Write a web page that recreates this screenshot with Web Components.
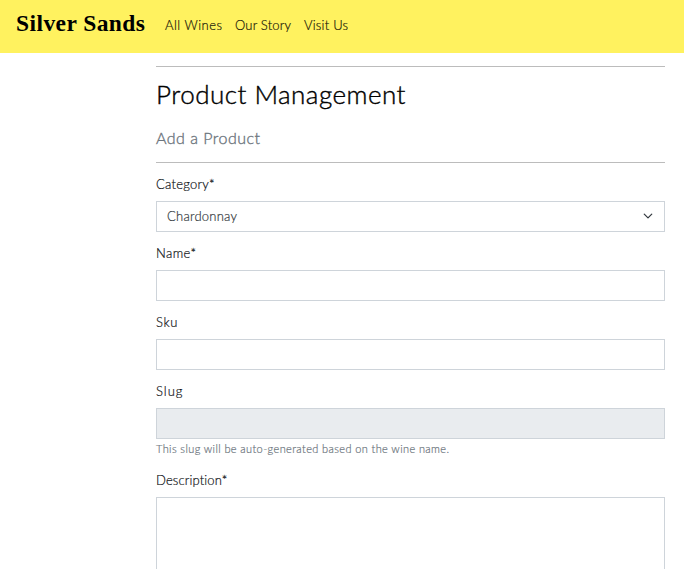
<!DOCTYPE html>
<html lang="en">
<head>
<meta charset="utf-8">
<title>Silver Sands</title>
<style>
html,body{margin:0;height:100%;overflow:hidden;background:#fff}
body{font-family:Lato,"Open Sans",sans-serif;color:#212529}
</style>
</head>
<body>
<wine-page></wine-page>
<script>
const define = (name, html, setup) => customElements.define(name, class extends HTMLElement {
  constructor() {
    super();
    this.attachShadow({mode: 'open'}).innerHTML = html;
  }
  connectedCallback() { if (setup) setup(this, this.shadowRoot); }
});

/* Single line of text, tracked so that it spans the given width. */
define('tracked-text', `<style>
:host{display:block;white-space:nowrap;width:max-content}
span{display:inline-block}
</style><span></span>`, (el, root) => {
  const span = root.querySelector('span');
  span.textContent = el.getAttribute('text');
  const natural = span.getBoundingClientRect().width;
  span.style.letterSpacing = (el.getAttribute('span') - natural) / (span.textContent.length - 1) + 'px';
});

define('site-nav', `<style>
:host{display:flex;height:53px;box-sizing:border-box;background:#fff25f;padding-left:16px}
.brand{font:700 23.5px/46px "Liberation Serif",serif;color:#000;width:149px}
nav{display:flex;font-size:13px;line-height:50px;font-weight:300;-webkit-text-stroke:.2px;color:#1a1909}
.a{width:70px}.b{width:69px}
</style>
<tracked-text class="brand" text="Silver Sands" span="129"></tracked-text>
<nav><tracked-text class="a" text="All Wines" span="57"></tracked-text>
<tracked-text class="b" text="Our Story" span="56"></tracked-text>
<tracked-text text="Visit Us" span="44"></tracked-text></nav>`);

define('page-heading', `<style>
:host{display:block;height:97px;box-sizing:border-box;border-top:1px solid #bcbcbc;border-bottom:1px solid #bcbcbc}
h2,p{margin:0;font-weight:300}
h2{font-size:26px;line-height:32px;padding-top:11px;color:#000;-webkit-text-stroke:.4px}
p{font-size:16px;line-height:20px;padding-top:18px;color:#6c757d;-webkit-text-stroke:.35px}
</style>
<h2><tracked-text text="Product Management" span="249.5"></tracked-text></h2>
<p><tracked-text text="Add a Product" span="104"></tracked-text></p>`);

define('form-field', `<style>
:host{display:block;font-size:13px;font-weight:300;-webkit-text-stroke:.2px}
.label{line-height:20px;margin-bottom:7px;color:#111417}
</style><div class="label"></div><slot></slot>`, (el, root) => {
  const t = document.createElement('tracked-text');
  t.setAttribute('text', el.getAttribute('label'));
  t.setAttribute('span', el.getAttribute('span'));
  root.querySelector('.label').append(t);
});

define('form-box', `<style>
:host{display:flex;align-items:center;justify-content:space-between;box-sizing:border-box;height:31px;border:1px solid #ced4da;background:#fff;padding:0 10px 2px;color:#343a40}
:host([disabled]){background:#e9ecef}
:host([tall]){height:160px}
</style><slot></slot>`);

define('wine-page', `<style>
:host{display:block;height:569px;overflow:hidden}
main{margin:13px 19px 0 156px}
form{display:grid;gap:11px;padding-top:11px}
.hint{font-size:11px;line-height:18px;margin-top:1px;color:#6c757d}
svg{display:block;width:10px;height:10px;margin-right:1px}
.slug{height:78px}
</style>
<site-nav></site-nav>
<main>
<page-heading></page-heading>
<form>
<form-field label="Category*" span="58.5"><form-box><tracked-text text="Chardonnay" span="70"></tracked-text>
<svg viewBox="0 0 16 16"><path d="M2 5l6 6 6-6" fill="none" stroke="#343a40" stroke-width="2" stroke-linecap="round" stroke-linejoin="round"/></svg></form-box></form-field>
<form-field label="Name*" span="40"><form-box></form-box></form-field>
<form-field label="Sku" span="21.5"><form-box></form-box></form-field>
<form-field class="slug" label="Slug" span="26.5"><form-box disabled></form-box><tracked-text class="hint" text="This slug will be auto-generated based on the wine name." span="293"></tracked-text></form-field>
<form-field label="Description*" span="71.5"><form-box tall></form-box></form-field>
</form>
</main>`);
</script>
</body>
</html>
